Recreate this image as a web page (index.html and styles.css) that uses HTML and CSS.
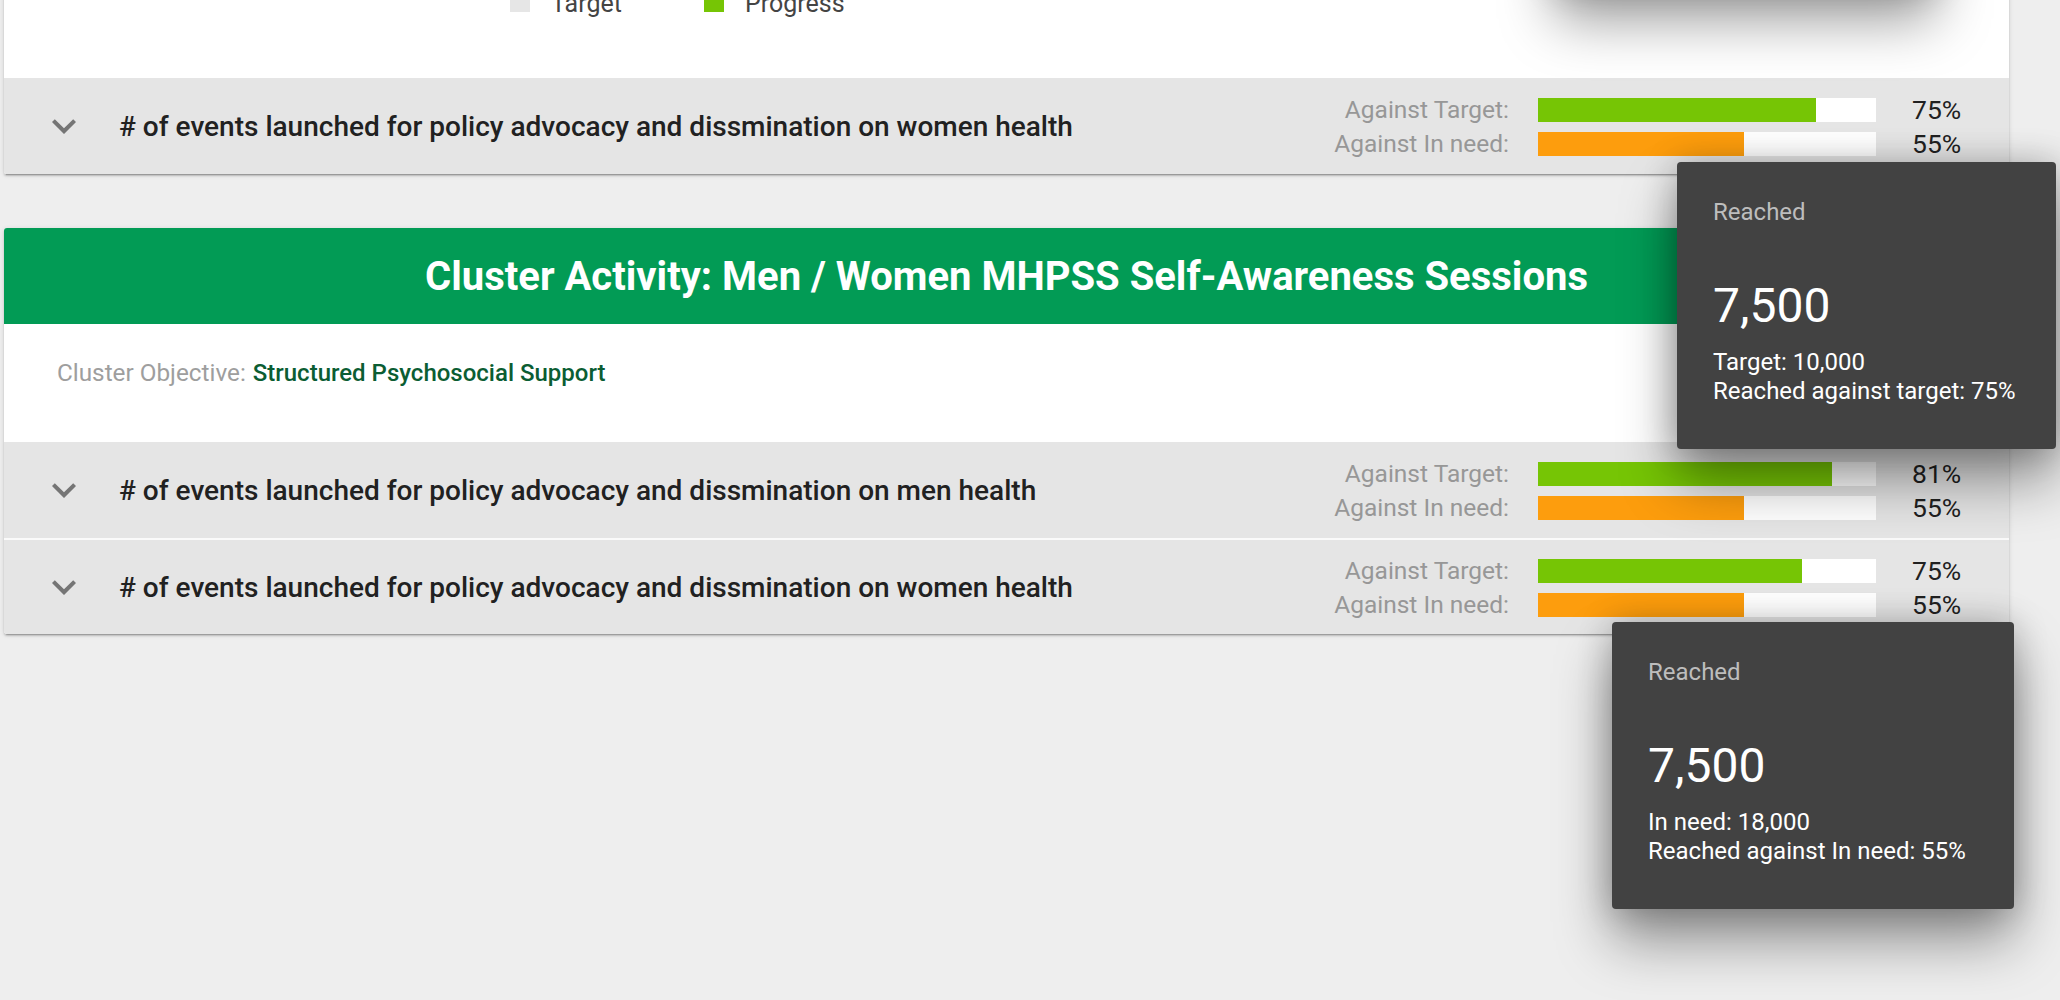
FILE: index.html
```html
<!DOCTYPE html>
<html lang="en">
<head>
<meta charset="utf-8">
<title>Cluster Activities</title>
<link rel="stylesheet" href="styles.css">
</head>
<body>
<div class="page">
  <section class="card">
    <div class="chart-tail">
      <div class="legend">
        <div class="legend-item"><span class="swatch swatch-target"></span><span class="legend-text">Target</span></div>
        <div class="legend-item"><span class="swatch swatch-progress"></span><span class="legend-text">Progress</span></div>
      </div>
    </div>
    <div class="row">
      <svg class="chevron" viewBox="0 0 24 24" width="48" height="48"><path d="M16.59 8.59L12 13.17 7.41 8.59 6 10l6 6 6-6z"/></svg>
      <div class="row-title"># of events launched for policy advocacy and dissmination on women health</div>
      <div class="metrics">
        <span class="m-label">Against Target:</span>
        <div class="bar"><div class="fill fill-target" style="width:82.2%"></div></div>
        <span class="m-pct">75%</span>
        <span class="m-label">Against In need:</span>
        <div class="bar"><div class="fill fill-need" style="width:60.9%"></div></div>
        <span class="m-pct">55%</span>
      </div>
    </div>
  </section>

  <section class="card card-activity">
    <header class="card-head">
      <h2 class="card-title">Cluster Activity: Men / Women MHPSS Self-Awareness Sessions</h2>
    </header>
    <div class="objective">
      <span class="obj-label">Cluster Objective:</span>
      <span class="obj-value">Structured Psychosocial Support</span>
    </div>
    <div class="row">
      <svg class="chevron" viewBox="0 0 24 24" width="48" height="48"><path d="M16.59 8.59L12 13.17 7.41 8.59 6 10l6 6 6-6z"/></svg>
      <div class="row-title"># of events launched for policy advocacy and dissmination on men health</div>
      <div class="metrics">
        <span class="m-label">Against Target:</span>
        <div class="bar"><div class="fill fill-target" style="width:87%"></div></div>
        <span class="m-pct">81%</span>
        <span class="m-label">Against In need:</span>
        <div class="bar"><div class="fill fill-need" style="width:60.9%"></div></div>
        <span class="m-pct">55%</span>
      </div>
    </div>
    <div class="row row-split">
      <svg class="chevron" viewBox="0 0 24 24" width="48" height="48"><path d="M16.59 8.59L12 13.17 7.41 8.59 6 10l6 6 6-6z"/></svg>
      <div class="row-title"># of events launched for policy advocacy and dissmination on women health</div>
      <div class="metrics">
        <span class="m-label">Against Target:</span>
        <div class="bar"><div class="fill fill-target" style="width:78.1%"></div></div>
        <span class="m-pct">75%</span>
        <span class="m-label">Against In need:</span>
        <div class="bar"><div class="fill fill-need" style="width:60.9%"></div></div>
        <span class="m-pct">55%</span>
      </div>
    </div>
  </section>

  <div class="tooltip tooltip-above">
    <div class="tt-label">Reached</div>
    <div class="tt-value">7,500</div>
    <div class="tt-lines">Target: 10,000<br>Reached against target: 75%</div>
  </div>

  <div class="tooltip tooltip-target">
    <div class="tt-label">Reached</div>
    <div class="tt-value">7,500</div>
    <div class="tt-lines">Target: 10,000<br>Reached against target: 75%</div>
  </div>

  <div class="tooltip tooltip-need">
    <div class="tt-label">Reached</div>
    <div class="tt-value">7,500</div>
    <div class="tt-lines">In need: 18,000<br>Reached against In need: 55%</div>
  </div>
</div>
</body>
</html>
```

FILE: styles.css
```css
* { box-sizing: border-box; }

html, body {
  margin: 0;
  padding: 0;
  background: #eeeeee;
  font-family: Roboto, "Liberation Sans", sans-serif;
  color: #212121;
  overflow: hidden;
}

.page {
  position: relative;
  margin-top: -40px;
  padding: 0 51px 0 4px;
  height: 1040px;
}

.card {
  background: #fff;
  border-radius: 2px;
  overflow: hidden;
  box-shadow: 0 2px 2px rgba(0,0,0,.14), 0 1px 5px rgba(0,0,0,.12), 0 3px 1px -2px rgba(0,0,0,.2);
}

.card-activity {
  margin-top: 54px;
  border-radius: 3px;
}

/* top chart tail */
.chart-tail {
  height: 118px;
  padding: 32px 0 0 506px;
}

.legend {
  display: grid;
  grid-template-columns: 194px auto;
}

.legend-item {
  display: flex;
  align-items: baseline;
  gap: 21px;
}

.swatch {
  display: block;
  width: 20px;
  height: 20px;
}

.swatch-target { background: #e6e6e6; }
.swatch-progress { background: #76c505; }

.legend-text {
  font-size: 25px;
  line-height: 24px;
  color: #444;
}

/* rows */
.row {
  display: flex;
  align-items: center;
  height: 96px;
  background: #e5e5e5;
  padding: 0 54px 0 36px;
}

.row-split {
  border-top: 2px solid #fafafa;
}

.chevron {
  flex: none;
  fill: #757575;
}

.row-title {
  flex: 1;
  margin-left: 31px;
  font-size: 28px;
  font-weight: 500;
  color: #212121;
  white-space: nowrap;
}

.metrics {
  display: grid;
  grid-template-columns: auto 338px 50px;
  grid-auto-rows: 24px;
  column-gap: 29px;
  row-gap: 10px;
  margin-top: 2px;
}

.m-label {
  text-align: right;
  font-size: 24.5px;
  line-height: 24px;
  color: #979797;
  white-space: nowrap;
}

.bar {
  background: #fff;
  height: 24px;
}

.fill { height: 100%; }
.fill-target { background: #76c505; }
.fill-need { background: #fd9d0d; }

.m-pct {
  margin-left: 7px;
  font-size: 26.5px;
  line-height: 24px;
  color: #212121;
  white-space: nowrap;
}

/* activity header */
.card-head {
  height: 96px;
  background: #029b55;
  display: flex;
  align-items: center;
  justify-content: center;
}

.card-title {
  margin: 0;
  font-size: 40px;
  font-weight: 700;
  color: #fff;
}

.objective {
  height: 118px;
  padding: 34px 53px 0;
  display: flex;
  align-items: baseline;
  gap: 7px;
  font-size: 24px;
  line-height: 30px;
}

.obj-label { color: #9e9e9e; font-size: 24.3px; }
.obj-value { color: #0b5d33; font-weight: 500; }

/* tooltips */
.tooltip {
  position: absolute;
  background: #424242;
  border-radius: 4px;
  color: #fff;
  padding: 36px 42px 43px 36px;
  height: 287px;
  box-shadow: 0 32px 56px rgba(0,0,0,.4), 0 0 34px rgba(0,0,0,.24);
  white-space: nowrap;
}

.tooltip-above { left: 1555px; top: -260px; width: 380px; }
.tooltip-target { left: 1677px; top: 202px; width: 379px; }
.tooltip-need { left: 1612px; top: 662px; width: 402px; }

.tt-label {
  font-size: 24px;
  line-height: 29px;
  color: #bdbdbd;
}

.tt-value {
  margin-top: 51px;
  font-size: 48px;
  line-height: 56px;
}

.tt-lines {
  margin-top: 14px;
  font-size: 24px;
  line-height: 29px;
}
```
